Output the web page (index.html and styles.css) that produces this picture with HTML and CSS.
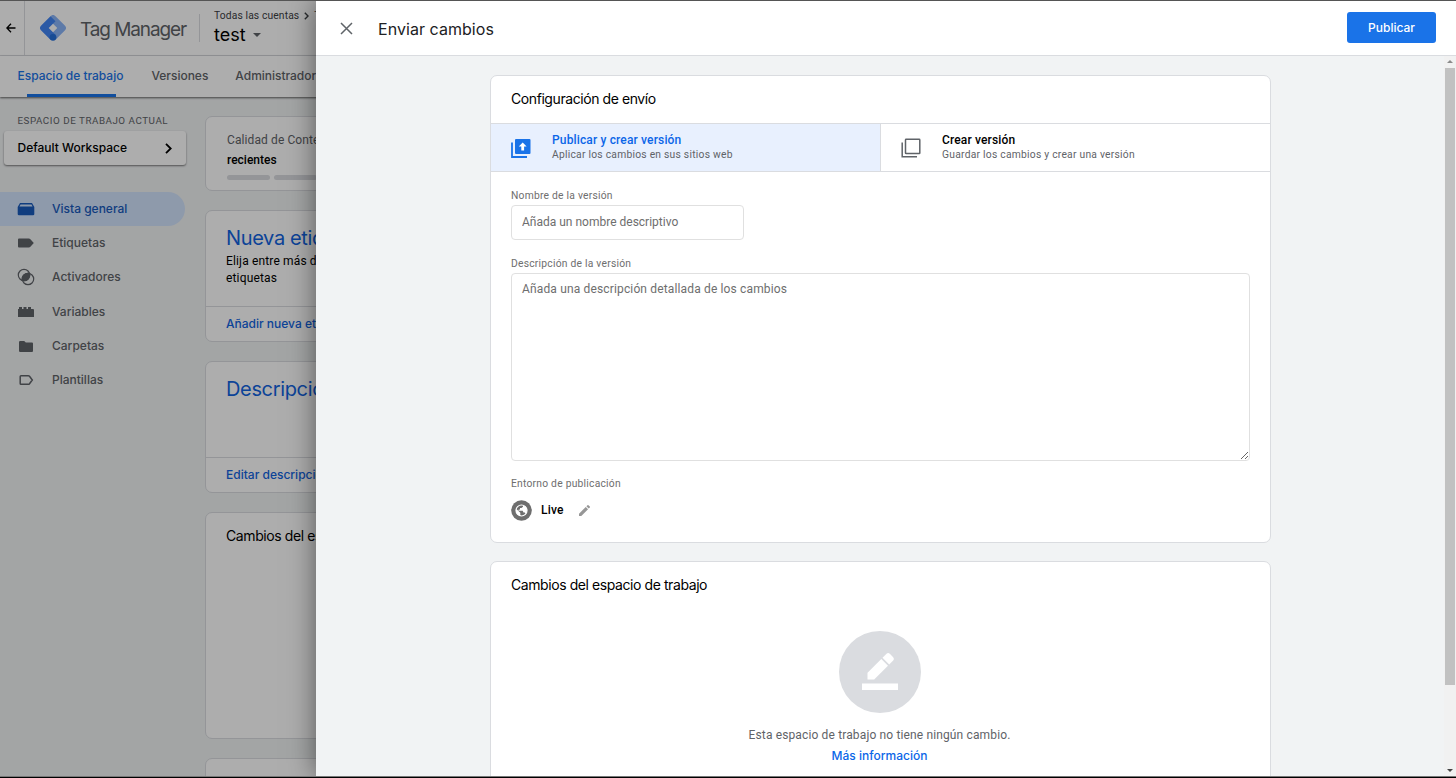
FILE: index.html
```html
<!DOCTYPE html>
<html lang="es">
<head>
  <meta charset="UTF-8">
  <meta name="viewport" content="width=device-width, initial-scale=1.0">
  <title>Tag Manager - Enviar cambios</title>
  <link rel="stylesheet" href="styles.css">
</head>
<body>
<div class="app">
  <header class="topbar">
    <div class="back">
      <svg width="10" height="10" viewBox="0 0 10 10" fill="none" stroke="#000" stroke-width="1.3"><path d="M9.5 5H1M5 .8L.9 5 5 9.2"/></svg>
    </div>
    <svg class="logo" width="26" height="26" viewBox="0 0 26 26">
      <path d="M10.5 1.2a3.5 3.5 0 0 1 5 0l9.3 9.300a3.500 3.500 0 0 1 0 5l-9.300 9.300-5-5L17.300 13 10.500 6.200z" fill="#8ab4f8"/>
      <path d="M10.500 1.200L1.200 10.500a3.500 3.500 0 0 0 0 5l9.300 9.300 5-5L8.700 13l6.800-6.800z" fill="#4285f4"/>
      <circle cx="13" cy="22.300" r="3.400" fill="#246fdb"/>
    </svg>
    <span class="product">Tag Manager</span>
    <div class="account">
      <div class="crumbs">Todas las cuentas <svg width="5" height="8" viewBox="0 0 5 8" fill="none" stroke="#3c4043" stroke-width="1.4"><path d="M.8.8L4 4 .8 7.200"/></svg> <span>Test</span></div>
      <div class="container-name">test <i class="caret"></i></div>
    </div>
  </header>
  <nav class="tabs">
    <a class="tab active">Espacio de trabajo</a>
    <a class="tab">Versiones</a>
    <a class="tab">Administrador</a>
  </nav>
  <div class="workspace">
    <aside class="sidebar">
      <div class="sidebar-label">ESPACIO DE TRABAJO ACTUAL</div>
      <div class="picker"><span>Default Workspace</span>
        <svg width="7" height="11" viewBox="0 0 7 11" fill="none" stroke="#000" stroke-width="1.8"><path d="M1 .8l4.700 4.700L1 10.200"/></svg>
      </div>
      <ul class="menu">
        <li class="selected"><svg width="18" height="14" viewBox="0 0 18 14"><path d="M3 1h12l2.300 4v7q0 1.300-1.300 1.300H2Q.7 13.300.7 12V5z" fill="#185abc"/><path d="M3.500 2.500h11l1 2h-13z" fill="#d2e3fc"/></svg><span>Vista general</span></li>
        <li><svg width="18" height="14" viewBox="0 0 18 14" fill="#5f6368"><path d="M2 2.500h9.800q1 0 1.600.8L16.800 7l-3.400 3.700q-.6.8-1.600.8H2q-1 0-1-1v-7q0-1 1-1z"/></svg><span>Etiquetas</span></li>
        <li><svg width="18" height="18" viewBox="0 0 18 18" fill="none" stroke="#5f6368" stroke-width="1.200"><circle cx="7" cy="7" r="5.700"/><circle cx="11" cy="11" r="5.700"/><path d="M12.500 5.500a5.700 5.700 0 0 0-7 7 5.700 5.700 0 0 0 7-7z" fill="#5f6368"/></svg><span>Activadores</span></li>
        <li><svg width="18" height="14" viewBox="0 0 18 14" fill="#5f6368"><path d="M1 4h1V2h3v2h1.500V2h3v2H11V2h3v2h2q1 0 1 1v7H1z"/></svg><span>Variables</span></li>
        <li><svg width="18" height="14" viewBox="0 0 18 14" fill="#5f6368"><path d="M3.200 2h4l1.600 1.500H15q1 0 1 1V12q0 1-1 1H3.200q-1.200 0-1.200-1V3q0-1 1.200-1z"/></svg><span>Carpetas</span></li>
        <li><svg width="18" height="14" viewBox="0 0 18 14" fill="none" stroke="#5f6368" stroke-width="1.500"><path d="M4 2.700h7.300q.7 0 1.200.6L15.300 7l-2.800 3.700q-.5.6-1.200.6H4q-.8 0-.8-.8v-7q0-.8.8-.8z"/></svg><span>Plantillas</span></li>
      </ul>
    </aside>
    <main class="cards">
      <section class="card quality">
        <p>Calidad de Contenedor</p>
        <b>recientes</b>
        <div class="bars"><i></i><i></i><i></i></div>
      </section>
      <section class="card summary">
        <div class="summary-body">
          <h2>Nueva etiqueta</h2>
          <p>Elija entre más de 50 tipos de<br>etiquetas</p>
        </div>
        <a class="summary-link">Añadir nueva etiqueta</a>
      </section>
      <section class="card summary">
        <div class="summary-body"><h2>Descripción</h2></div>
        <a class="summary-link">Editar descripción</a>
      </section>
      <section class="card changes">Cambios del espacio de trabajo</section>
      <section class="card"></section>
    </main>
  </div>
</div>

<div class="scrim"></div>

<div class="drawer">
  <header class="drawer-header">
    <svg width="13" height="13" viewBox="0 0 13 13" fill="none" stroke="#5f6368" stroke-width="1.500"><path d="M1 1l11 11M12 1L1 12"/></svg>
    <h1>Enviar cambios</h1>
    <button class="publish">Publicar</button>
  </header>
  <div class="drawer-body">
    <div class="panels">
      <section class="panel">
        <h3>Configuración de envío</h3>
        <div class="options">
          <div class="option chosen">
            <svg width="20" height="20" viewBox="0 0 20 20"><path d="M1 4.500V19h15" fill="none" stroke="#1a73e8" stroke-width="1.800"/><rect x="4" y="1" width="15.500" height="15" rx="1" fill="#1a73e8"/><path d="M11.700 4.500L7.800 8.400h2.500v4h2.800v-4h2.500z" fill="#fff"/></svg>
            <div><b>Publicar y crear versión</b><p>Aplicar los cambios en sus sitios web</p></div>
          </div>
          <div class="option">
            <svg width="20" height="20" viewBox="0 0 20 20" fill="none" stroke="#5f6368" stroke-width="1.500"><path d="M1.200 4.500V18.800h14.800"/><rect x="4.500" y="1.300" width="14.300" height="14.300" rx=".6"/></svg>
            <div><b>Crear versión</b><p>Guardar los cambios y crear una versión</p></div>
          </div>
        </div>
        <div class="form">
          <label>Nombre de la versión</label>
          <input type="text" placeholder="Añada un nombre descriptivo">
          <label>Descripción de la versión</label>
          <textarea placeholder="Añada una descripción detallada de los cambios"></textarea>
          <label>Entorno de publicación</label>
          <div class="environment">
            <svg width="21" height="21" viewBox="0 0 21 21"><circle cx="10.500" cy="10.500" r="10.300" fill="#6e6e6e"/><circle cx="10.500" cy="10.500" r="5.500" fill="#6e6e6e" stroke="#fff" stroke-width="1.200"/><path d="M5.400 9l3.900 3.700v2.800l1.200.5c-3 .1-5.500-2.500-5.500-5.500zM12 5.300v1.500l-1.500 1.200H9v1.500l-1.500.3v1h4.200l.8 1.800h1.300l.9 1.200c1.800-2 1.700-5.600-.5-7.200z" fill="#fff"/></svg>
            <b>Live</b>
            <svg width="11" height="11" viewBox="3 3 18 18" fill="#979797"><path d="M3 17.250V21h3.750L17.810 9.940l-3.750-3.750L3 17.250zM20.710 7.040a1 1 0 0 0 0-1.410l-2.340-2.340a1 1 0 0 0-1.410 0l-1.830 1.830 3.750 3.750 1.830-1.830z"/></svg>
          </div>
        </div>
      </section>
      <section class="panel">
        <h3>Cambios del espacio de trabajo</h3>
        <div class="empty">
          <svg width="82" height="82" viewBox="0 0 82 82"><circle cx="41" cy="41" r="41" fill="#dadce0"/><path d="M23 52.500h36v6.500H23zM28.500 41.800v6.700h6.700L49 34.700 42.300 28zM43.500 26.800l4-4q1.700-1.500 3.300 0l3.400 3.400q1.500 1.700 0 3.300l-4 4z" fill="#fff"/></svg>
          <p>Esta espacio de trabajo no tiene ningún cambio.</p>
          <a>Más información</a>
        </div>
      </section>
    </div>
    <div class="scrollbar"><i class="arrow-up"></i><i class="thumb"></i><i class="arrow-down"></i></div>
  </div>
</div>
<div class="frame-edge"></div>
</body>
</html>
```
FILE: styles.css
```css
* {
  box-sizing: border-box;
}
body {
  margin: 0;
  height: 778px;
  overflow: hidden;
  position: relative;
  background: #000;
  font-family: Roboto, sans-serif;
  border-top: 1px solid #555;
}
h1, h2, h3, p, ul {
  margin: 0;
  padding: 0;
  font-weight: 400;
}
svg {
  display: block;
  flex: none;
}
.app {
  height: 775px;
  overflow: hidden;
  background: #f1f3f4;
}
/* Cabecera */
.topbar {
  display: flex;
  align-items: center;
  height: 55px;
  background: #fff;
  border-bottom: 1px solid #dadce0;
}
.back {
  width: 25px;
  height: 54px;
  display: flex;
  align-items: center;
  padding-left: 6px;
  border-right: 1px solid #dadce0;
}
.logo {
  margin-left: 15px;
}
.product {
  margin-left: 14px;
  padding-top: 2px;
  width: 119px;
  font: 400 19px Inter, sans-serif;
  letter-spacing: -1.1px;
  color: #5f6368;
  white-space: nowrap;
}
.account {
  height: 28px;
  padding-left: 14px;
  border-left: 1px solid #dadce0;
  display: flex;
  flex-direction: column;
  justify-content: center;
  white-space: nowrap;
}
.crumbs {
  display: flex;
  align-items: center;
  gap: 5px;
  font-size: 10.3px;
  line-height: 14px;
  letter-spacing: 0.12px;
  color: #3c4043;
}
.container-name {
  display: flex;
  align-items: center;
  gap: 7px;
  font: 400 18px/24px Inter, sans-serif;
}
.caret {
  border: 4px solid transparent;
  border-top: 4px solid #5f6368;
  border-bottom: 0;
}
.tabs {
  position: relative;
  display: flex;
  height: 41px;
  padding-left: 17.5px;
  gap: 27px;
  background: #fff;
  box-shadow: 0 1px 2px rgba(0, 0, 0, 0.6);
  font: 500 12px/39px Inter, sans-serif;
  letter-spacing: -0.02px;
  color: #5f6368;
  white-space: nowrap;
}
.tab.active {
  width: 107px;
  color: #1a73e8;
  background: linear-gradient(#1a73e8, #1a73e8) 9px 38px / 89px 3px no-repeat;
}
/* Zona de trabajo */
.workspace {
  display: flex;
}
.sidebar {
  width: 205px;
  padding-top: 17px;
}
.sidebar-label {
  padding-left: 17.5px;
  font-size: 9.8px;
  line-height: 14px;
  letter-spacing: 0.53px;
  color: #5f6368;
  white-space: nowrap;
}
.picker {
  display: flex;
  align-items: center;
  justify-content: space-between;
  margin: 3px 0 0 4px;
  width: 182px;
  height: 34px;
  padding: 0 14px 0 13.5px;
  background: #fff;
  border-radius: 3px;
  box-shadow: 0 1px 2px rgba(0, 0, 0, 0.5);
  font: 500 12px Inter, sans-serif;
}
.picker span {
  padding-bottom: 2px;
}
.menu {
  list-style: none;
  margin-top: 27px;
}
.menu li {
  display: flex;
  align-items: center;
  height: 34.2px;
  width: 185px;
  padding-left: 17px;
  font: 500 12px Inter, sans-serif;
  color: #5f6368;
}
.menu span {
  padding: 0 0 1px 17px;
}
.menu .selected {
  background: #d2e3fc;
  color: #185abc;
  border-radius: 0 17px 17px 0;
}
.cards {
  flex: none;
  width: 400px;
  padding-top: 19px;
  display: flex;
  flex-direction: column;
  gap: 19px;
}
.card {
  height: 132px;
  background: #fff;
  border: 1px solid #dadce0;
  border-radius: 7px;
}
.quality {
  height: 75px;
  padding: 13px 21px;
  font-size: 12px;
  line-height: 20px;
  letter-spacing: 0.1px;
}
.quality p {
  color: #5f6368;
}
.quality b {
  display: block;
  font-weight: 500;
  letter-spacing: 0;
}
.bars {
  display: flex;
  gap: 4px;
  margin-top: 5px;
}
.bars i {
  width: 43px;
  height: 5px;
  border-radius: 3px;
  background: #dadce0;
}
.summary-body {
  height: 96px;
  padding: 14px 20px;
  border-bottom: 1px solid #dadce0;
}
.summary h2 {
  font: 400 20px/27px Inter, sans-serif;
  letter-spacing: -0.35px;
  color: #1264e0;
}
.summary p {
  padding-top: 1px;
  font-size: 12px;
  line-height: 17px;
  letter-spacing: 0.15px;
}
.summary-link {
  display: block;
  padding-left: 20px;
  font: 500 12px/33px Inter, sans-serif;
  color: #1264e0;
}
.changes {
  height: 227px;
  padding: 12px 20px;
  font: 400 14px/21px Inter, sans-serif;
  letter-spacing: -0.4px;
}
.scrim {
  position: absolute;
  inset: 0 0 1px 0;
  background: rgba(0, 0, 0, 0.32);
}
/* Panel lateral */
.drawer {
  position: absolute;
  top: 0;
  left: 316px;
  right: 0;
  height: 775px;
  overflow: hidden;
  background: #f1f3f4;
  box-shadow: 0 0 26px rgba(0, 0, 0, 0.5);
}
.drawer-header {
  display: flex;
  align-items: center;
  height: 55px;
  padding: 0 20px 0 24px;
  background: #fff;
  border-bottom: 1px solid #dadce0;
}
.drawer-header h1 {
  flex: 1;
  padding: 2px 0 0 25px;
  font: 400 16px Inter, sans-serif;
  letter-spacing: 0.05px;
  color: #202124;
}
.publish {
  width: 89px;
  height: 31px;
  margin-bottom: 2px;
  padding: 0;
  border: 0;
  border-radius: 3px;
  background: #1a73e8;
  color: #fff;
  font: 500 12px Inter, sans-serif;
}
.drawer-body {
  display: flex;
  justify-content: space-between;
  height: 720px;
}
.panels {
  padding: 19px 0 0 174px;
  display: flex;
  flex-direction: column;
  gap: 18px;
}
.panel {
  flex: none;
  width: 781px;
  height: 468px;
  background: #fff;
  border: 1px solid #dadce0;
  border-radius: 7px;
}
.panel h3 {
  height: 47px;
  padding-left: 20px;
  font: 400 14px/45px Inter, sans-serif;
  letter-spacing: -0.42px;
}
.options {
  display: flex;
  height: 49px;
  border: solid #dadce0;
  border-width: 1px 0;
}
.option {
  display: flex;
  align-items: center;
  flex: 1;
  gap: 21px;
  padding-left: 20px;
}
.option b {
  display: block;
  font-size: 12px;
  font-weight: 500;
  line-height: 15px;
  letter-spacing: 0.15px;
}
.option p {
  font-size: 10.3px;
  line-height: 14px;
  letter-spacing: 0.24px;
  color: #5f6368;
}
.option.chosen {
  background: #e8f0fe;
  border-right: 1px solid #dadce0;
}
.option.chosen b {
  color: #0b66e8;
}
.form {
  padding: 17px 20px 0;
}
.form label {
  display: block;
  font-size: 10.3px;
  line-height: 14px;
  letter-spacing: 0.23px;
  color: #6e6e6e;
}
.form input, .form textarea {
  display: block;
  border: 1px solid #e0e0e0;
  border-radius: 4px;
  background: #fff;
  font: 400 12px Roboto, sans-serif;
}
.form input {
  width: 233px;
  height: 35px;
  margin: 2px 0 17px;
  padding: 0 10px 2px;
  letter-spacing: 0;
}
.form textarea {
  width: 739px;
  height: 188px;
  margin: 2px 0 16px;
  padding: 8px 10px;
  letter-spacing: 0.15px;
}
.form ::placeholder {
  color: #6e6e6e;
}
.environment {
  display: flex;
  align-items: center;
  margin-top: 9px;
  font-size: 12px;
}
.environment b {
  padding: 0 15px 2px 9px;
  font-weight: 500;
  letter-spacing: 0.2px;
}
.empty {
  display: flex;
  flex-direction: column;
  align-items: center;
  padding: 22px 2px 0 0;
}
.empty p {
  margin-top: 13px;
  font-size: 12px;
  line-height: 18px;
  letter-spacing: 0.14px;
  color: #5f6368;
}
.empty a {
  font: 500 12px/24px Inter, sans-serif;
  color: #0b66e8;
}
.scrollbar {
  width: 12px;
  display: flex;
  flex-direction: column;
  align-items: center;
  background: #f1f1f1;
}
.arrow-up, .arrow-down {
  border: 3px solid transparent;
}
.arrow-up {
  margin: 4px 0 5px;
  border-top: 0;
  border-bottom-color: #8a8a8a;
}
.thumb {
  width: 10px;
  height: 617px;
  background: #c1c1c1;
}
.arrow-down {
  margin-top: auto;
  margin-bottom: 4px;
  border-bottom: 0;
  border-top-color: #444;
}
.frame-edge {
  position: absolute;
  left: 0;
  right: 0;
  bottom: 1px;
  height: 1px;
  background: #777;
}
```
